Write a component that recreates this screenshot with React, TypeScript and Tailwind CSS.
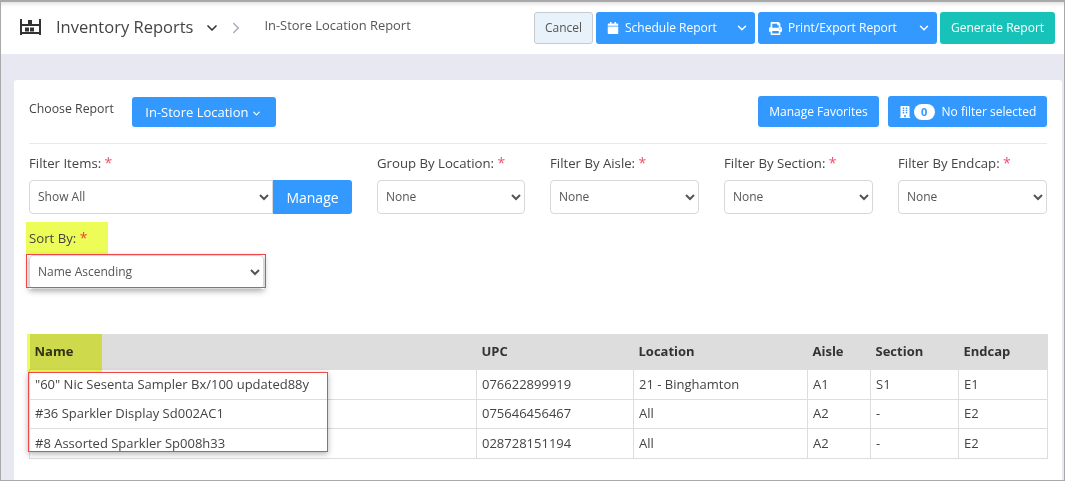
import { FaCalendar, FaPrint, FaBuilding } from "react-icons/fa";
import { ChevronDown, ChevronRight } from "lucide-react";

const columns = [447, 157, 174, 63, 88, 89];

const rows = [
  { name: '"60" Nic Sesenta Sampler Bx/100 updated88y', upc: "076622899919", location: "21 - Binghamton", aisle: "A1", section: "S1", endcap: "E1", h: "h-[30px]" },
  { name: "#36 Sparkler Display Sd002AC1", upc: "075646456467", location: "All", aisle: "A2", section: "-", endcap: "E2", h: "h-[29px]" },
  { name: "#8 Assorted Sparkler Sp008h33", upc: "028728151194", location: "All", aisle: "A2", section: "-", endcap: "E2", h: "h-[30px]" },
];

function Label({ text, star = "text-[#f0506e]" }: { text: string; star?: string }) {
  return (
    <label className="block text-[13.2px] leading-[18px] text-[#444] mb-[8px]">
      {text} <span className={`text-[14px] leading-[0] ${star}`}>*</span>
    </label>
  );
}

function Select({ value, className }: { value: string; className: string }) {
  return (
    <select className={`h-[34px] bg-white border border-[#d8d8d8] rounded-[4px] pl-[4px] pb-[1px] text-[12px] text-[#555] ${className}`} defaultValue={value}>
      <option>{value}</option>
    </select>
  );
}

function Btn({ children, className }: { children: React.ReactNode; className: string }) {
  return (
    <button className={`flex items-center justify-center rounded-[3px] bg-[#3399ff] text-white text-[12px] ${className}`}>
      {children}
    </button>
  );
}

function SplitBtn({ icon, text, className }: { icon: React.ReactNode; text: string; className: string }) {
  return (
    <button className={`flex items-center h-[32px] rounded-[3px] bg-[#3399ff] text-white text-[12px] ${className}`}>
      <span className="flex-1 flex items-center pl-[11px] gap-[6px]">
        {icon}
        {text}
      </span>
      <span className="w-[27px] flex justify-center">
        <ChevronDown size={14} strokeWidth={2.5} />
      </span>
    </button>
  );
}

export default function App() {
  return (
    <div className="w-[1065px] h-[481px] overflow-hidden border border-[#a9a9a9] border-t-2 bg-[#e7e8f1] text-[#444]" style={{ fontFamily: '"Open Sans", sans-serif' }}>
      <div className="h-[52px] bg-white flex items-center pl-[19px] pr-[9px] shadow-[inset_0_5px_4px_-3px_rgba(0,0,0,0.12)]">
        <svg width="21" height="16" viewBox="0 0 21 16" className="mr-[15px] mb-[3px]" fill="#333">
          <rect x="0" y="0" width="2" height="16" />
          <rect x="19" y="0" width="2" height="16" />
          <rect x="0" y="5" width="21" height="2" />
          <rect x="0" y="13" width="21" height="2" />
          <rect x="8" y="1" width="4" height="4" />
          <rect x="5" y="8.500" width="4" height="4" />
          <rect x="10" y="8.500" width="4" height="4" />
        </svg>
        <span className="text-[16.5px] text-[#444] mb-[2px]">Inventory Reports</span>
        <ChevronDown size={16} strokeWidth={2.5} className="ml-[11px] text-[#333]" />
        <ChevronRight size={18} strokeWidth={2} className="ml-[7px] text-[#a9adb8] mb-[1px]" />
        <span className="ml-[19px] text-[12.9px] text-[#555] mb-[5px]">In-Store Location Report</span>
        <div className="ml-auto flex gap-[3px]">
          <button className="w-[59px] h-[32px] rounded-[3px] bg-[#e8f2fb] border border-[#c8ccd0] text-[12px] text-[#555]">Cancel</button>
          <SplitBtn icon={<FaCalendar size={12} />} text="Schedule Report" className="w-[159px]" />
          <SplitBtn icon={<FaPrint size={13} />} text="Print/Export Report" className="w-[179px]" />
          <button className="w-[115px] h-[32px] rounded-[3px] bg-[#17c3b8] text-white text-[12px]">Generate Report</button>
        </div>
      </div>

      <div className="ml-[13px] mt-[26px] w-[1048px] h-[402px] bg-white rounded-t-[3px] px-[15px]">
        <div className="h-[64px] flex items-start pt-[16px] border-b border-[#e9e9e9]">
          <span className="text-[12.3px] text-[#444] mt-[4px]">Choose Report</span>
          <Btn className="ml-[18px] mt-[1px] w-[144px] h-[30px] gap-[3px] text-[13px] pt-[2px]">
            In-Store Location
            <ChevronDown size={11} strokeWidth={2.5} />
          </Btn>
          <Btn className="ml-auto w-[121px] h-[31px]">Manage Favorites</Btn>
          <Btn className="ml-[9px] w-[159px] h-[31px]">
            <FaBuilding size={12} />
            <span className="ml-[3px] w-[21px] h-[16px] rounded-full bg-white text-[#3399ff] text-[11px] font-bold leading-[16px]">0</span>
            <span className="ml-[7px]">No filter selected</span>
          </Btn>
        </div>

        <div className="flex gap-[25px] mt-[10px]">
          <div className="w-[323px]">
            <Label text="Filter Items:" />
            <div className="flex">
              <Select value="Show All" className="w-[244px] rounded-r-none" />
              <button className="w-[79px] h-[34px] bg-[#3399ff] text-white text-[14px] rounded-r-[3px]">Manage</button>
            </div>
          </div>
          <div className="w-[148px]">
            <Label text="Group By Location:" />
            <Select value="None" className="w-full" />
          </div>
          <div className="w-[149px]">
            <Label text="Filter By Aisle:" />
            <Select value="None" className="w-full" />
          </div>
          <div className="w-[149px]">
            <Label text="Filter By Section:" />
            <Select value="None" className="w-full" />
          </div>
          <div className="w-[149px]">
            <Label text="Filter By Endcap:" />
            <Select value="None" className="w-full" />
          </div>
        </div>

        <div className="relative mt-[9px] w-[235px]">
          <div className="absolute left-[-3px] top-[-1px] w-[82px] h-[32px] bg-[#eefc58]" />
          <div className="relative pt-[6px]">
            <Label text="Sort By:" star="text-[#e5482d]" />
            <div className="shadow-[0_2px_6px_rgba(0,0,0,0.35)]">
              <Select value="Name Ascending" className="w-full block" />
            </div>
            <div className="absolute left-[-3px] top-[31px] w-[240px] h-[34px] border border-[#f0474a] pointer-events-none" />
          </div>
        </div>

        <div className="relative mt-[45px]">
          <table className="table-fixed w-[1018px] border-collapse text-[13px]">
            <colgroup>
              {columns.map((w, i) => (
                <col key={i} style={{ width: w }} />
              ))}
            </colgroup>
            <thead>
              <tr className="h-[35px] bg-[#dddddd] font-bold text-[#333] text-left">
                {["Name", "UPC", "Location", "Aisle", "Section", "Endcap"].map(h => (
                  <th key={h} className="px-[5px] pt-[1px]">{h}</th>
                ))}
              </tr>
            </thead>
            <tbody>
              {rows.map(r => (
                <tr key={r.upc} className={r.h}>
                  {[r.name, r.upc, r.location, r.aisle, r.section, r.endcap].map((c, i) => (
                    <td key={i} className="px-[5px] pt-[1px] border border-[#dddddd] text-[#444]">{c}</td>
                  ))}
                </tr>
              ))}
            </tbody>
          </table>
          <div className="absolute left-[-2px] top-0 w-[75px] h-[38px] bg-[#eefc58] mix-blend-multiply" />
          <div className="absolute left-[-1px] top-[38px] w-[300px] h-[80px] border border-[#f0474a] shadow-[0_2px_6px_rgba(0,0,0,0.3)] pointer-events-none" />
        </div>
      </div>
    </div>
  );
}
